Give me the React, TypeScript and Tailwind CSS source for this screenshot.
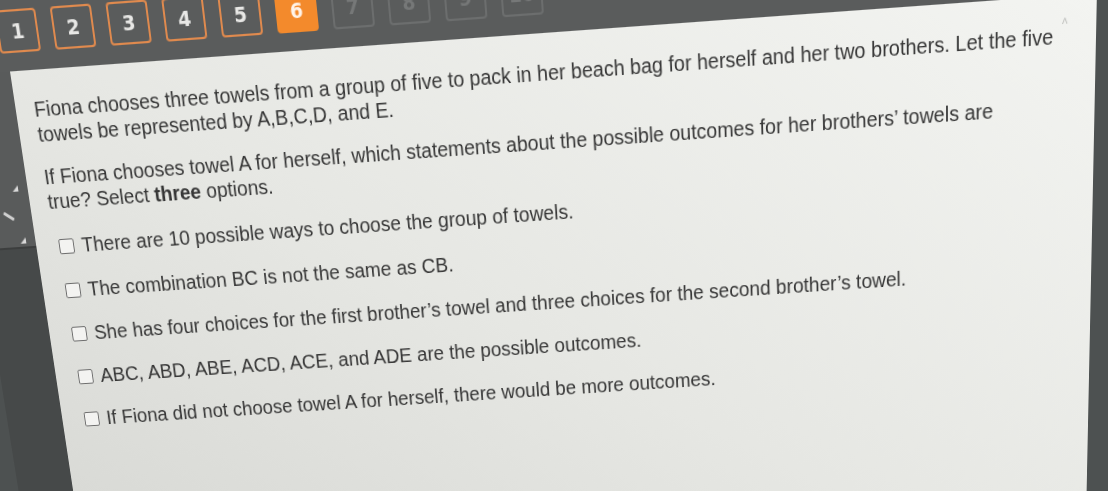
import React from 'react';

// flat layout -> photographed screen (the reference is a photo of a monitor)
type Pt = [number, number];

function solveHomography(src: Pt[], dst: Pt[]): number[] {
  const A: number[][] = [];
  for (let i = 0; i < 4; i++) {
    const [u, v] = src[i];
    const [x, y] = dst[i];
    A.push([u, v, 1, 0, 0, 0, -u * x, -v * x, x]);
    A.push([0, 0, 0, u, v, 1, -u * y, -v * y, y]);
  }
  const n = 8;
  for (let c = 0; c < n; c++) {
    let p = c;
    for (let r = c + 1; r < n; r++) if (Math.abs(A[r][c]) > Math.abs(A[p][c])) p = r;
    [A[c], A[p]] = [A[p], A[c]];
    for (let r = 0; r < n; r++) {
      if (r === c) continue;
      const f = A[r][c] / A[c][c];
      for (let k = c; k <= n; k++) A[r][k] -= f * A[c][k];
    }
  }
  return A.map((row, i) => row[n] / row[i]);
}

const SIDE = 60;
const BAR = 100;
const PW = 1100;
const PH = 420;

const h = solveHomography(
  [
    [SIDE, BAR],
    [SIDE + PW, BAR],
    [SIDE, BAR + PH],
    [SIDE + PW, BAR + PH],
  ],
  [
    [10, 71.5],
    [1097, -7],
    [73, 490],
    [1088, 426],
  ]
);

const transform = `matrix3d(${h[0]},${h[3]},0,${h[6]},${h[1]},${h[4]},0,${h[7]},0,0,1,0,${h[2]},${h[5]},0,1)`;

const steps = [1, 2, 3, 4, 5, 6, 7, 8, 9, 10];

const options = [
  'There are 10 possible ways to choose the group of towels.',
  'The combination BC is not the same as CB.',
  'She has four choices for the first brother\u2019s towel and three choices for the second brother\u2019s towel.',
  'ABC, ABD, ABE, ACD, ACE, and ADE are the possible outcomes.',
  'If Fiona did not choose towel A for herself, there would be more outcomes.',
];

const StepBox = ({ n }: { n: number }) => {
  if (n < 6) {
    return (
      <div className="w-[42px] h-[40px] shrink-0 rounded-[4px] border-2 border-[#e08a4e] flex items-center justify-center text-[19px] font-bold text-[#e8e8e6]">
        {n}
      </div>
    );
  }
  if (n === 6) {
    return (
      <div className="w-[42px] h-[40px] shrink-0 rounded-[4px] bg-[#f38a2c] flex items-center justify-center text-[19px] font-bold text-[#fff4ea]">
        {n}
      </div>
    );
  }
  return (
    <div className="w-[42px] h-[40px] shrink-0 rounded-[4px] border-2 border-[#6c6e6e] flex items-center justify-center text-[19px] font-bold text-[#767878]">
      {n}
    </div>
  );
};

export default function App() {
  return (
    <div className="w-[1108px] h-[491px] overflow-hidden bg-[#4d5151]">
      <div
        className="w-[1220px] h-[720px] origin-top-left blur-[0.5px] flex flex-col"
        style={{ transform }}
      >
        {/* question tabs */}
        <div className="h-[100px] shrink-0 bg-[#5a5c5c] flex items-start gap-[15px] pl-[53px] pt-[43px] font-['DejaVu_Sans',sans-serif]">
          {steps.map((n) => (
            <StepBox key={n} n={n} />
          ))}
        </div>

        <div className="flex flex-1">
          {/* left rail */}
          <div className="w-[60px] shrink-0 flex flex-col">
            <div className="h-[170px] bg-[#595b5b] border-b-2 border-[#3c3e3e] flex flex-col items-end pr-[10px]">
              <div className="mt-[108px] w-0 h-0 border-l-[6px] border-l-transparent border-b-[6px] border-b-[#d9d9d9]" />
              <div className="mt-[22px] mr-[8px] w-[12px] h-[3px] bg-[#d0d0d0] rotate-[35deg]" />
              <div className="mt-[20px] w-0 h-0 border-l-[6px] border-l-transparent border-b-[6px] border-b-[#d9d9d9]" />
            </div>
            <div className="flex-1 bg-[#464949]" />
          </div>

          {/* question panel */}
          <div className="relative w-[1100px] shrink-0 bg-linear-to-bl from-[#f3f4f1] via-[#e6e7e3] to-[#d3d4d0] pl-[19px] pt-[25px] text-[20px] leading-[24px] text-[#363636] font-['Liberation_Sans',Arial,sans-serif]">
            <span className="absolute right-[28px] top-[18px] text-[11px] leading-none text-[#b9bab7]">˄</span>

            <p className="whitespace-nowrap">
              Fiona chooses three towels from a group of five to pack in her beach bag for herself and her two brothers. Let the five
              <br />
              towels be represented by A,B,C,D, and E.
            </p>
            <p className="whitespace-nowrap mt-[17px]">
              If Fiona chooses towel A for herself, which statements about the possible outcomes for her brothers&#8217; towels are
              <br />
              true? Select <span className="font-bold">three</span> options.
            </p>

            <div className="mt-[10px] flex flex-col">
              {options.map((o) => (
                <label key={o} className="h-[44px] flex items-center gap-[8px] pl-[5px] whitespace-nowrap">
                  <span className="w-[16px] h-[15px] shrink-0 rounded-[2px] border-[1.5px] border-[#6d6d6d] bg-[#f3f3f1]" />
                  <span>{o}</span>
                </label>
              ))}
            </div>
          </div>
        </div>
      </div>
    </div>
  );
}
